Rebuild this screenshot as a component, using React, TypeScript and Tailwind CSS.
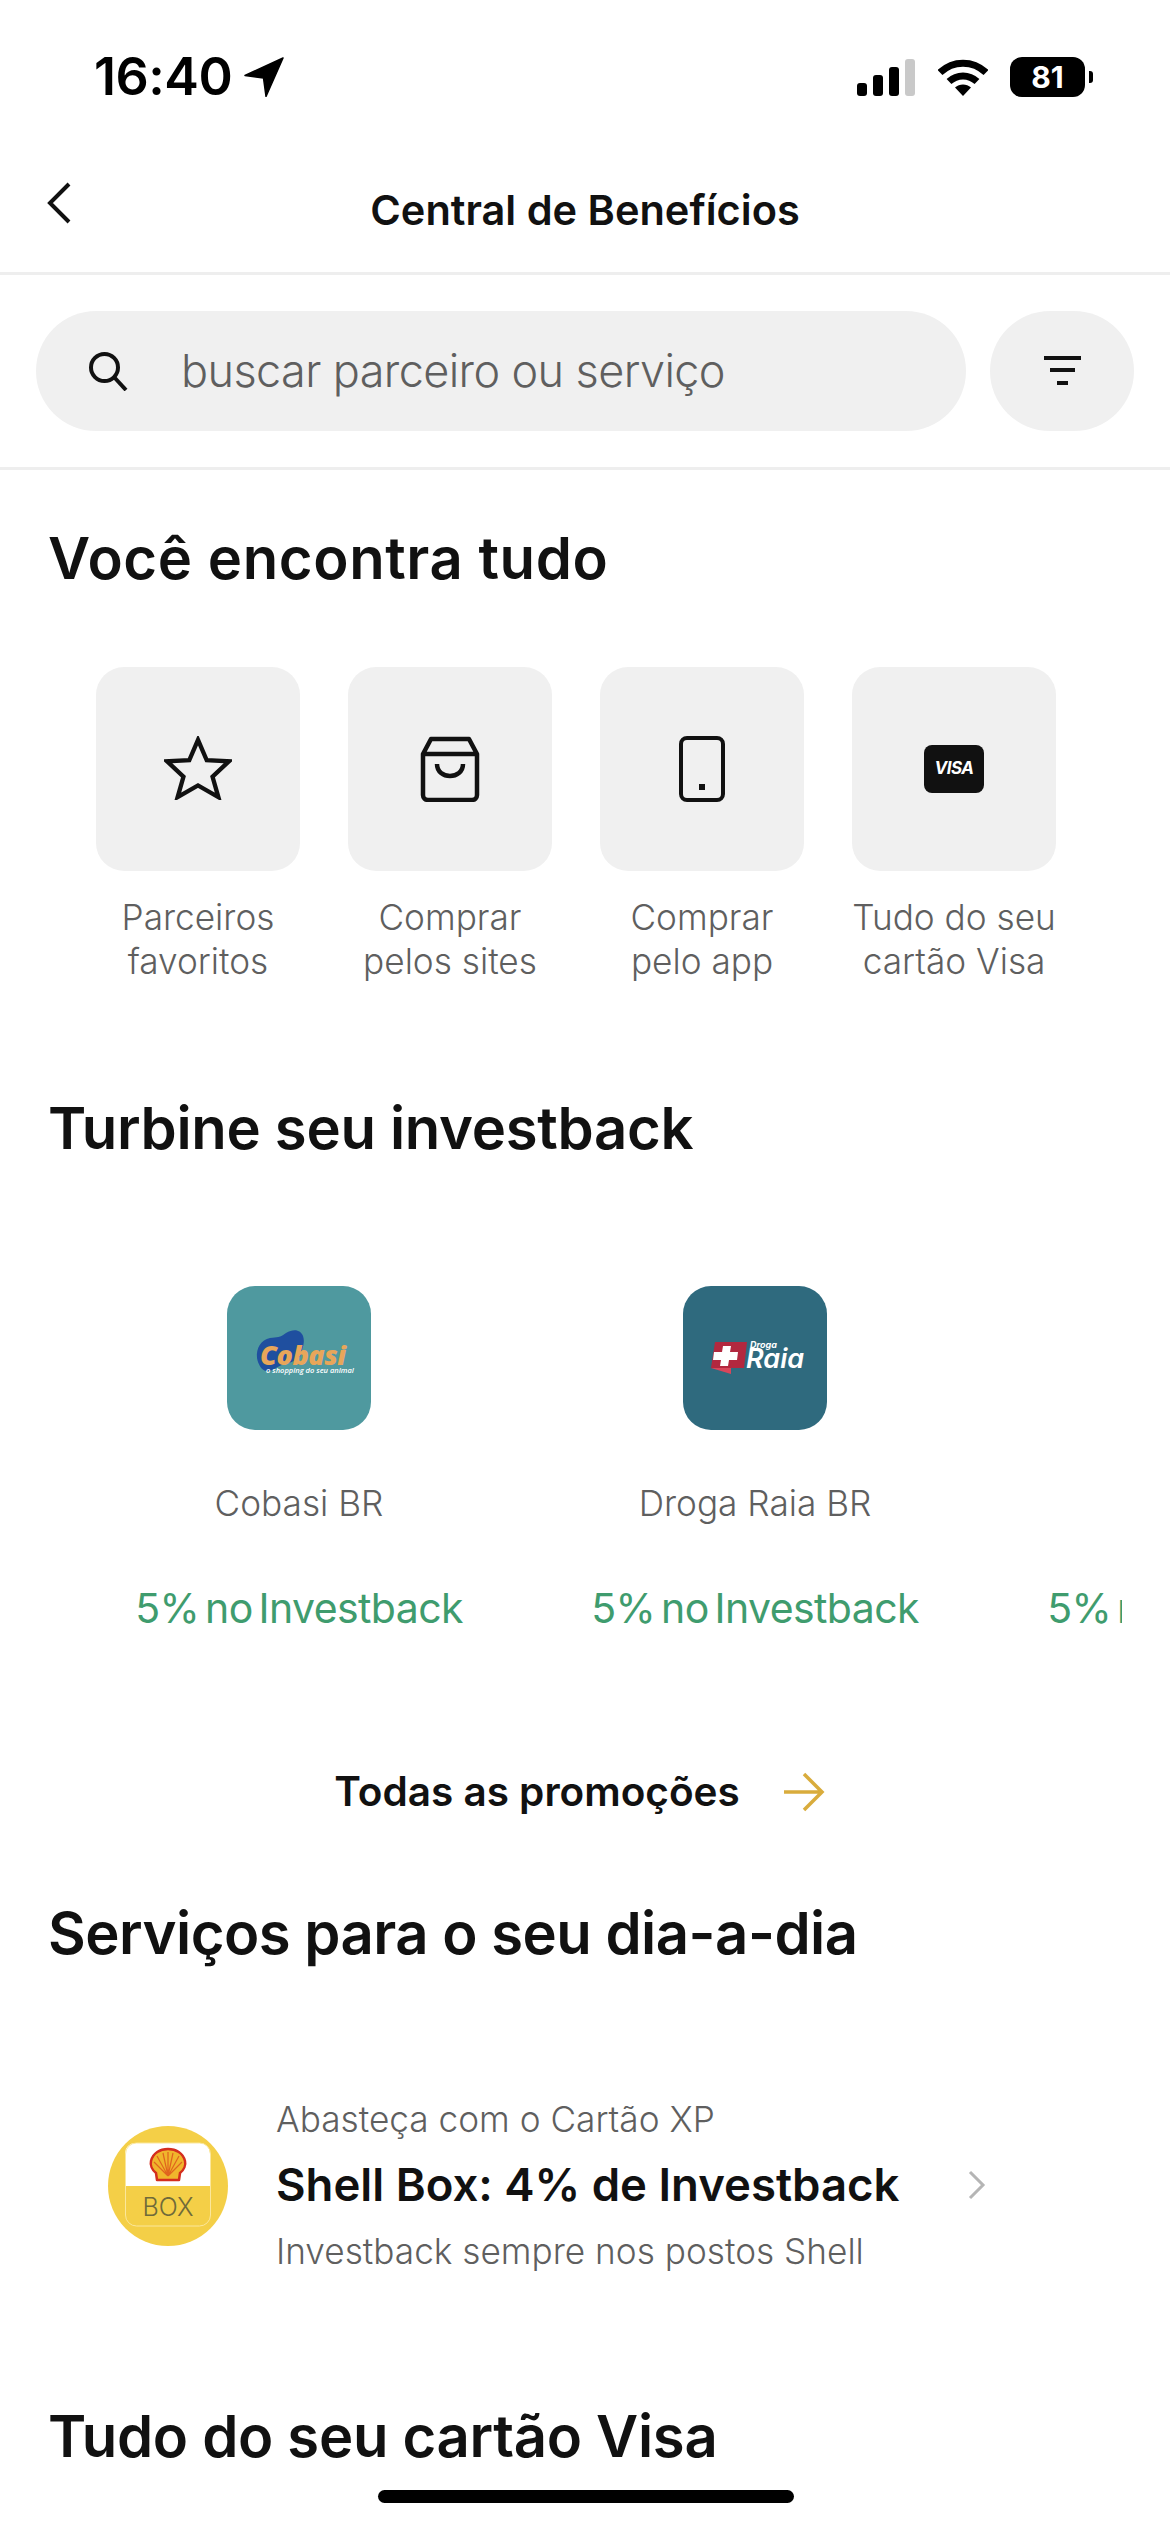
const Tile = ({ icon, a, b }: { icon: React.ReactNode; a: string; b: string }) => (
  <div className="w-[204px] flex flex-col items-center shrink-0">
    <div className="w-[204px] h-[204px] rounded-[28px] bg-[#f0f0f0] flex items-center justify-center">{icon}</div>
    <div className="mt-[24px] w-[252px] text-center text-[35.200px] leading-[44px] font-light text-[#5f5f5f]">
      <div>{a}</div>
      <div>{b}</div>
    </div>
  </div>
);

const Heading = ({ children, className }: { children: string; className: string }) => (
  <h2 className={"text-[58px] leading-[72px] font-semibold text-[#111111] pl-[48px] " + className}>{children}</h2>
);

const Partner = ({ logo, name, pct }: { logo?: React.ReactNode; name?: string; pct: string }) => (
  <div className="w-[456px] shrink-0 flex flex-col items-center">
    <div className="h-[144px] w-[144px]">{logo}</div>
    <div className="mt-[51px] h-[44px] text-[35.200px] leading-[44px] font-light text-[#5f5f5f]">{name}</div>
    <div className="mt-[59px] text-[41px] leading-[48px] tracking-[-0.6px] [word-spacing:-5px] text-[#3f9c6e] whitespace-nowrap">{pct}</div>
  </div>
);

const CobasiLogo = () => (
  <svg width="144" height="144" viewBox="0 0 144 144">
    <rect width="144" height="144" rx="28" fill="#4f999f" />
    <path d="M30 72c-1-10 4-18 13-20 7-1 10 0 16-5 8-5 15-3 17 3 2 6 0 10-1 14 0 10-10 12-18 14-6 2-11 7-16 7-6 1-10-7-11-13z" fill="#1f4f9f" />
    <text x="33" y="79" fontFamily="Open Sans" fontWeight="800" fontStyle="italic" fontSize="27" fill="#e8a65a" letterSpacing="-0.5">Cobasi</text>
    <text x="39" y="87" fontFamily="Open Sans" fontWeight="600" fontStyle="italic" fontSize="7.500" fill="#ffffff">o shopping do seu animal</text>
  </svg>
);

const RaiaLogo = () => (
  <svg width="144" height="144" viewBox="0 0 144 144">
    <rect width="144" height="144" rx="28" fill="#2f6a7e" />
    <path d="M32 56h32l-3 26H28z" fill="#b2283f" />
    <path d="M28 82l20 0 0 6z" fill="#d9455a" />
    <path d="M40 60h8l-1 6h8l-1 8h-8l-1 6h-8l1-6h-8l1-8h8z" fill="#ffffff" />
    <text x="67" y="62" fontFamily="Inter" fontWeight="700" fontStyle="italic" fontSize="9" fill="#ffffff">Droga</text>
    <text x="63" y="82" fontFamily="Inter" fontWeight="600" fontStyle="italic" fontSize="27" fill="#ffffff">Raia</text>
  </svg>
);

const ShellLogo = () => (
  <svg width="120" height="120" viewBox="0 0 120 120" className="shrink-0">
    <circle cx="60" cy="60" r="60" fill="#f4cf47" />
    <path d="M17 60V27a10 10 0 0 1 10-10h65a10 10 0 0 1 10 10v33z" fill="#ffffff" />
    <rect x="17.500" y="17" width="85" height="83" rx="11" fill="none" stroke="#fbe79b" strokeWidth="1" />
    <path d="M49 54l-1-7c-4-3-6-8-5-12 2-8 9-12 17-12s15 4 17 12c1 4-1 9-5 12l-1 7z" fill="#f0b52c" stroke="#d42e1e" strokeWidth="2.500" strokeLinejoin="round" />
    <path d="M60 50V26M60 50l-5-23M60 50l-11-20M60 50L46 36M60 50l5-23M60 50l11-20M60 50l14-14" stroke="#e0641e" strokeWidth="1.200" />
    <text x="60" y="90" textAnchor="middle" fontFamily="Inter" fontWeight="300" fontSize="25" fill="#6f6a3a">BOX</text>
  </svg>
);

export default function App() {
  return (
    <div className="relative w-[1170px] h-[2532px] overflow-hidden bg-white font-['Inter',sans-serif]">
      {/* status bar */}
      <div className="h-[154px] flex items-start pt-[47px] pl-[94px] pr-[85px] justify-between">
        <div className="flex items-center gap-[12px] h-[60px]">
          <span className="text-[52px] leading-[60px] font-semibold text-black tracking-[-0.5px]">16:40</span>
          <svg width="40" height="40" viewBox="0 0 40 40"><path d="M39 1L1 18.500 19.500 21 22 39.500z" fill="#000" stroke="#000" strokeWidth="1.500" strokeLinejoin="round" /></svg>
        </div>
        <div className="flex items-center h-[60px]">
          <svg width="58" height="37" viewBox="0 0 58 37" className="mr-[23px]">
            <rect x="0" y="24" width="10" height="13" rx="3" fill="#000" />
            <rect x="16" y="16" width="10" height="21" rx="3" fill="#000" />
            <rect x="32" y="8" width="10" height="29" rx="3" fill="#000" />
            <rect x="48" y="0" width="10" height="37" rx="3" fill="#c9c9c9" />
          </svg>
          <svg width="50" height="37" viewBox="0 0 50 37" className="mr-[22px]">
            <path d="M2 13.500C15 1 35 1 48 13.500" fill="none" stroke="#000" strokeWidth="7" />
            <path d="M11 22.500C19 15 31 15 39 22.500" fill="none" stroke="#000" strokeWidth="7" />
            <path d="M25 37l-8-8.500c4.500-4 11.500-4 16 0z" fill="#000" />
          </svg>
          <div className="relative w-[75px] h-[40px] rounded-[12px] bg-black flex items-center justify-center text-white text-[30px] font-bold leading-none">
            81
            <div className="absolute right-[-8px] top-[14px] w-[4px] h-[12px] rounded-r-[3px] bg-black" />
          </div>
        </div>
      </div>

      {/* title row */}
      <div className="relative h-[118px] flex items-center justify-center border-b-[3px] border-[#eeeeee] box-content">
        <svg width="26" height="42" viewBox="0 0 26 42" className="absolute left-[46px] top-[28px]">
          <path d="M23 2L4 21l19 19" fill="none" stroke="#111" strokeWidth="4" />
        </svg>
        <span className="text-[41.500px] leading-[48px] font-semibold text-[#111111] -mt-[7px]">Central de Benefícios</span>
      </div>

      {/* search row */}
      <div className="h-[195px] pt-[36px] pl-[36px] pr-[36px] flex items-start gap-[24px] border-b-[3px] border-[#eeeeee]">
        <div className="w-[930px] h-[120px] rounded-full bg-[#f0f0f0] flex items-center pl-[52px]">
          <svg width="40" height="40" viewBox="0 0 40 40" className="shrink-0">
            <circle cx="16.500" cy="16.500" r="13.500" fill="none" stroke="#111" strokeWidth="4" />
            <path d="M26 26l12 13" stroke="#111" strokeWidth="4" />
          </svg>
          <span className="ml-[53px] text-[45px] leading-[56px] font-light tracking-[-0.6px] text-[#5f5f5f]">buscar parceiro ou serviço</span>
        </div>
        <div className="w-[144px] h-[120px] rounded-full bg-[#f0f0f0] flex items-center justify-center">
          <svg width="37" height="30" viewBox="0 0 37 30">
            <rect x="0" y="0" width="37" height="4" fill="#111" />
            <rect x="6" y="12" width="25" height="4" fill="#111" />
            <rect x="13" y="25" width="11" height="4" fill="#111" />
          </svg>
        </div>
      </div>

      <Heading className="mt-[52px] tracking-[0.6px]">Você encontra tudo</Heading>

      <div className="mt-[73px] pl-[96px] flex gap-[48px]">
        <Tile a="Parceiros" b="favoritos" icon={
          <svg width="68" height="64" viewBox="0 0 70 66" className="-mt-[3px]"><path d="M35 4l9 21 23 1-17 16 6 21-21-12-21 12 6-21L3 26l23-1z" fill="none" stroke="#111" strokeWidth="4.500" /></svg>
        } />
        <Tile a="Comprar" b="pelos sites" icon={
          <svg width="60" height="66" viewBox="0 0 60 66" fill="none" stroke="#111" strokeWidth="4.500">
            <path d="M11 3h38l8 15v41a5 5 0 0 1-5 5H8a5 5 0 0 1-5-5V18zM3 18h54" strokeLinejoin="round" />
            <path d="M17 28c0 16 26 16 26 0" />
          </svg>
        } />
        <Tile a="Comprar" b="pelo app" icon={
          <svg width="46" height="66" viewBox="0 0 46 66" fill="none">
            <rect x="2" y="2" width="42" height="62" rx="6" stroke="#111" strokeWidth="4" />
            <rect x="20" y="48" width="6" height="6" fill="#111" />
          </svg>
        } />
        <Tile a="Tudo do seu" b="cartão Visa" icon={
          <div className="w-[60px] h-[48px] rounded-[8px] bg-[#111111] flex items-center justify-center text-white text-[17px] font-bold italic tracking-[-0.5px]">VISA</div>
        } />
      </div>

      <Heading className="mt-[109px] tracking-[-0.3px]">Turbine seu investback</Heading>

      <div className="mt-[122px] ml-[48px] w-[1074px] overflow-hidden flex pl-[23px]">
        <Partner logo={<CobasiLogo />} name="Cobasi BR" pct="5% no Investback" />
        <Partner logo={<RaiaLogo />} name="Droga Raia BR" pct="5% no Investback" />
        <Partner pct="5% no Investback" />
      </div>

      <div className="mt-[136px] h-[48px] flex items-center justify-center pr-[11px]">
        <span className="text-[40.500px] leading-[48px] font-semibold text-[#111111]">Todas as promoções</span>
        <svg width="42" height="40" viewBox="0 0 42 40" className="ml-[43px]" fill="none" stroke="#d9ac3c" strokeWidth="3.500">
          <path d="M1 20h38M21 2l18 18-18 18" />
        </svg>
      </div>

      <Heading className="mt-[81px] tracking-[-0.5px]">Serviços para o seu dia-a-dia</Heading>

      <div className="mt-[128px] pl-[108px] flex">
        <div className="pt-[29px]"><ShellLogo /></div>
        <div className="ml-[48px]">
          <div className="text-[35.200px] leading-[44px] font-light text-[#5f5f5f]">Abasteça com o Cartão XP</div>
          <div className="mt-[16px] text-[45.500px] leading-[56px] font-semibold text-[#111111] whitespace-nowrap">Shell Box: 4% de Investback</div>
          <div className="mt-[16px] text-[35.200px] leading-[44px] font-light text-[#5f5f5f]">Investback sempre nos postos Shell</div>
        </div>
        <svg width="18" height="30" viewBox="0 0 18 30" className="mt-[73px] ml-[69px]" fill="none" stroke="#b5b5b5" strokeWidth="3">
          <path d="M2 2l13 13L2 28" />
        </svg>
      </div>

      <Heading className="mt-[127px] tracking-[-0.3px]">Tudo do seu cartão Visa</Heading>

      <div className="absolute left-[378px] top-[2490px] w-[416px] h-[13px] rounded-full bg-black" />
    </div>
  );
}
